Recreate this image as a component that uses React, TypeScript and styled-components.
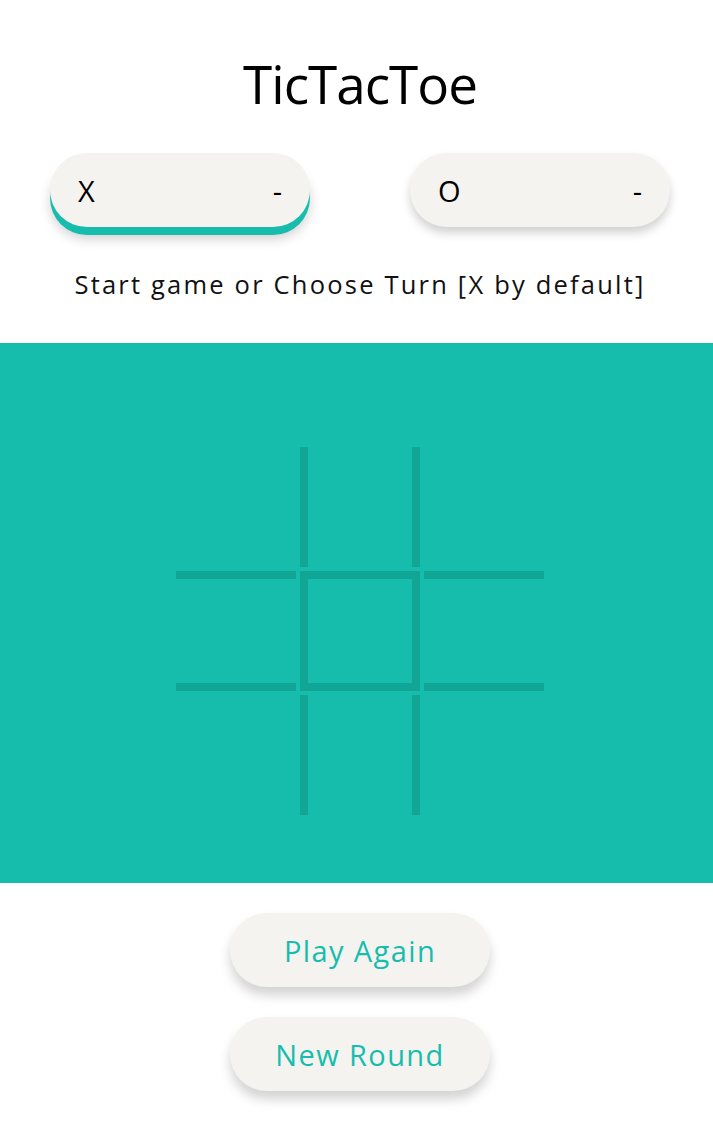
import React from "react";
import styled, { createGlobalStyle } from "styled-components";

const Global = createGlobalStyle`
  html, body { margin: 0; padding: 0; background: #fff; overflow-x: hidden; }
  body { font-family: "Open Sans", "Liberation Sans", sans-serif; }
`;

const TEAL = "#16bdad";
const LINE = "#10a595";
const CARD = "#f4f3f0";

const Page = styled.div`
  width: 720px;
  display: flex;
  flex-direction: column;
  align-items: center;
  padding-bottom: 40px;
`;

const Title = styled.h1`
  margin: 48px 0 0;
  height: 72px;
  font-size: 53px;
  line-height: 72px;
  font-weight: 400;
  color: #000;
  letter-spacing: -1px;
`;

const Scores = styled.div`
  margin-top: 33px;
  display: flex;
  gap: 100px;
`;

const ScoreBox = styled.div<{ $active?: boolean }>`
  width: 260px;
  height: 74px;
  box-sizing: border-box;
  padding: 0 28px;
  display: flex;
  align-items: center;
  justify-content: space-between;
  background: ${CARD};
  border-radius: 37px;
  font-size: 29px;
  color: #000;
  box-shadow: ${(p) =>
    p.$active
      ? `0 8px 0 ${TEAL}, 0 12px 12px rgba(0,0,0,0.18)`
      : `0 6px 10px rgba(0,0,0,0.18)`};
`;

const Status = styled.p`
  margin: 40px 0 0;
  font-size: 25.5px;
  line-height: 34px;
  letter-spacing: 2.2px;
  color: #111;
`;

const Board = styled.section`
  margin-top: 42px;
  width: 100%;
  height: 540px;
  background: ${TEAL};
  box-sizing: border-box;
  padding-top: 104px;
  display: flex;
  justify-content: center;
`;

const Grid = styled.div`
  display: grid;
  grid-template-columns: repeat(3, 120px);
  grid-template-rows: repeat(3, 120px);
  gap: 4px;
  height: 368px;
`;

const Cell = styled.div<{ $col: number; $row: number }>`
  box-sizing: border-box;
  ${(p) =>
    p.$col === 1
      ? `border-left: 8px solid ${LINE}; border-right: 8px solid ${LINE};`
      : ""}
  ${(p) =>
    p.$row === 1
      ? `border-top: 8px solid ${LINE}; border-bottom: 8px solid ${LINE};`
      : ""}
`;

const Actions = styled.div`
  margin-top: 30px;
  display: flex;
  flex-direction: column;
  gap: 30px;
`;

const ActionButton = styled.button`
  width: 260px;
  height: 74px;
  border: none;
  border-radius: 37px;
  background: ${CARD};
  color: ${TEAL};
  font-family: inherit;
  font-size: 29px;
  font-weight: 500;
  letter-spacing: 1.4px;
  box-shadow: 0 8px 12px rgba(0,0,0,0.18);
  cursor: pointer;
`;

export default function App() {
  const cells = Array.from({ length: 9 }, (_, i) => i);
  return (
    <>
      <Global />
      <Page>
        <Title>TicTacToe</Title>
        <Scores>
          <ScoreBox $active>
            <span>X</span>
            <span>-</span>
          </ScoreBox>
          <ScoreBox>
            <span>O</span>
            <span>-</span>
          </ScoreBox>
        </Scores>
        <Status>Start game or Choose Turn [X by default]</Status>
        <Board>
          <Grid>
            {cells.map((i) => (
              <Cell key={i} $col={i % 3} $row={Math.floor(i / 3)} />
            ))}
          </Grid>
        </Board>
        <Actions>
          <ActionButton>Play Again</ActionButton>
          <ActionButton>New Round</ActionButton>
        </Actions>
      </Page>
    </>
  );
}
